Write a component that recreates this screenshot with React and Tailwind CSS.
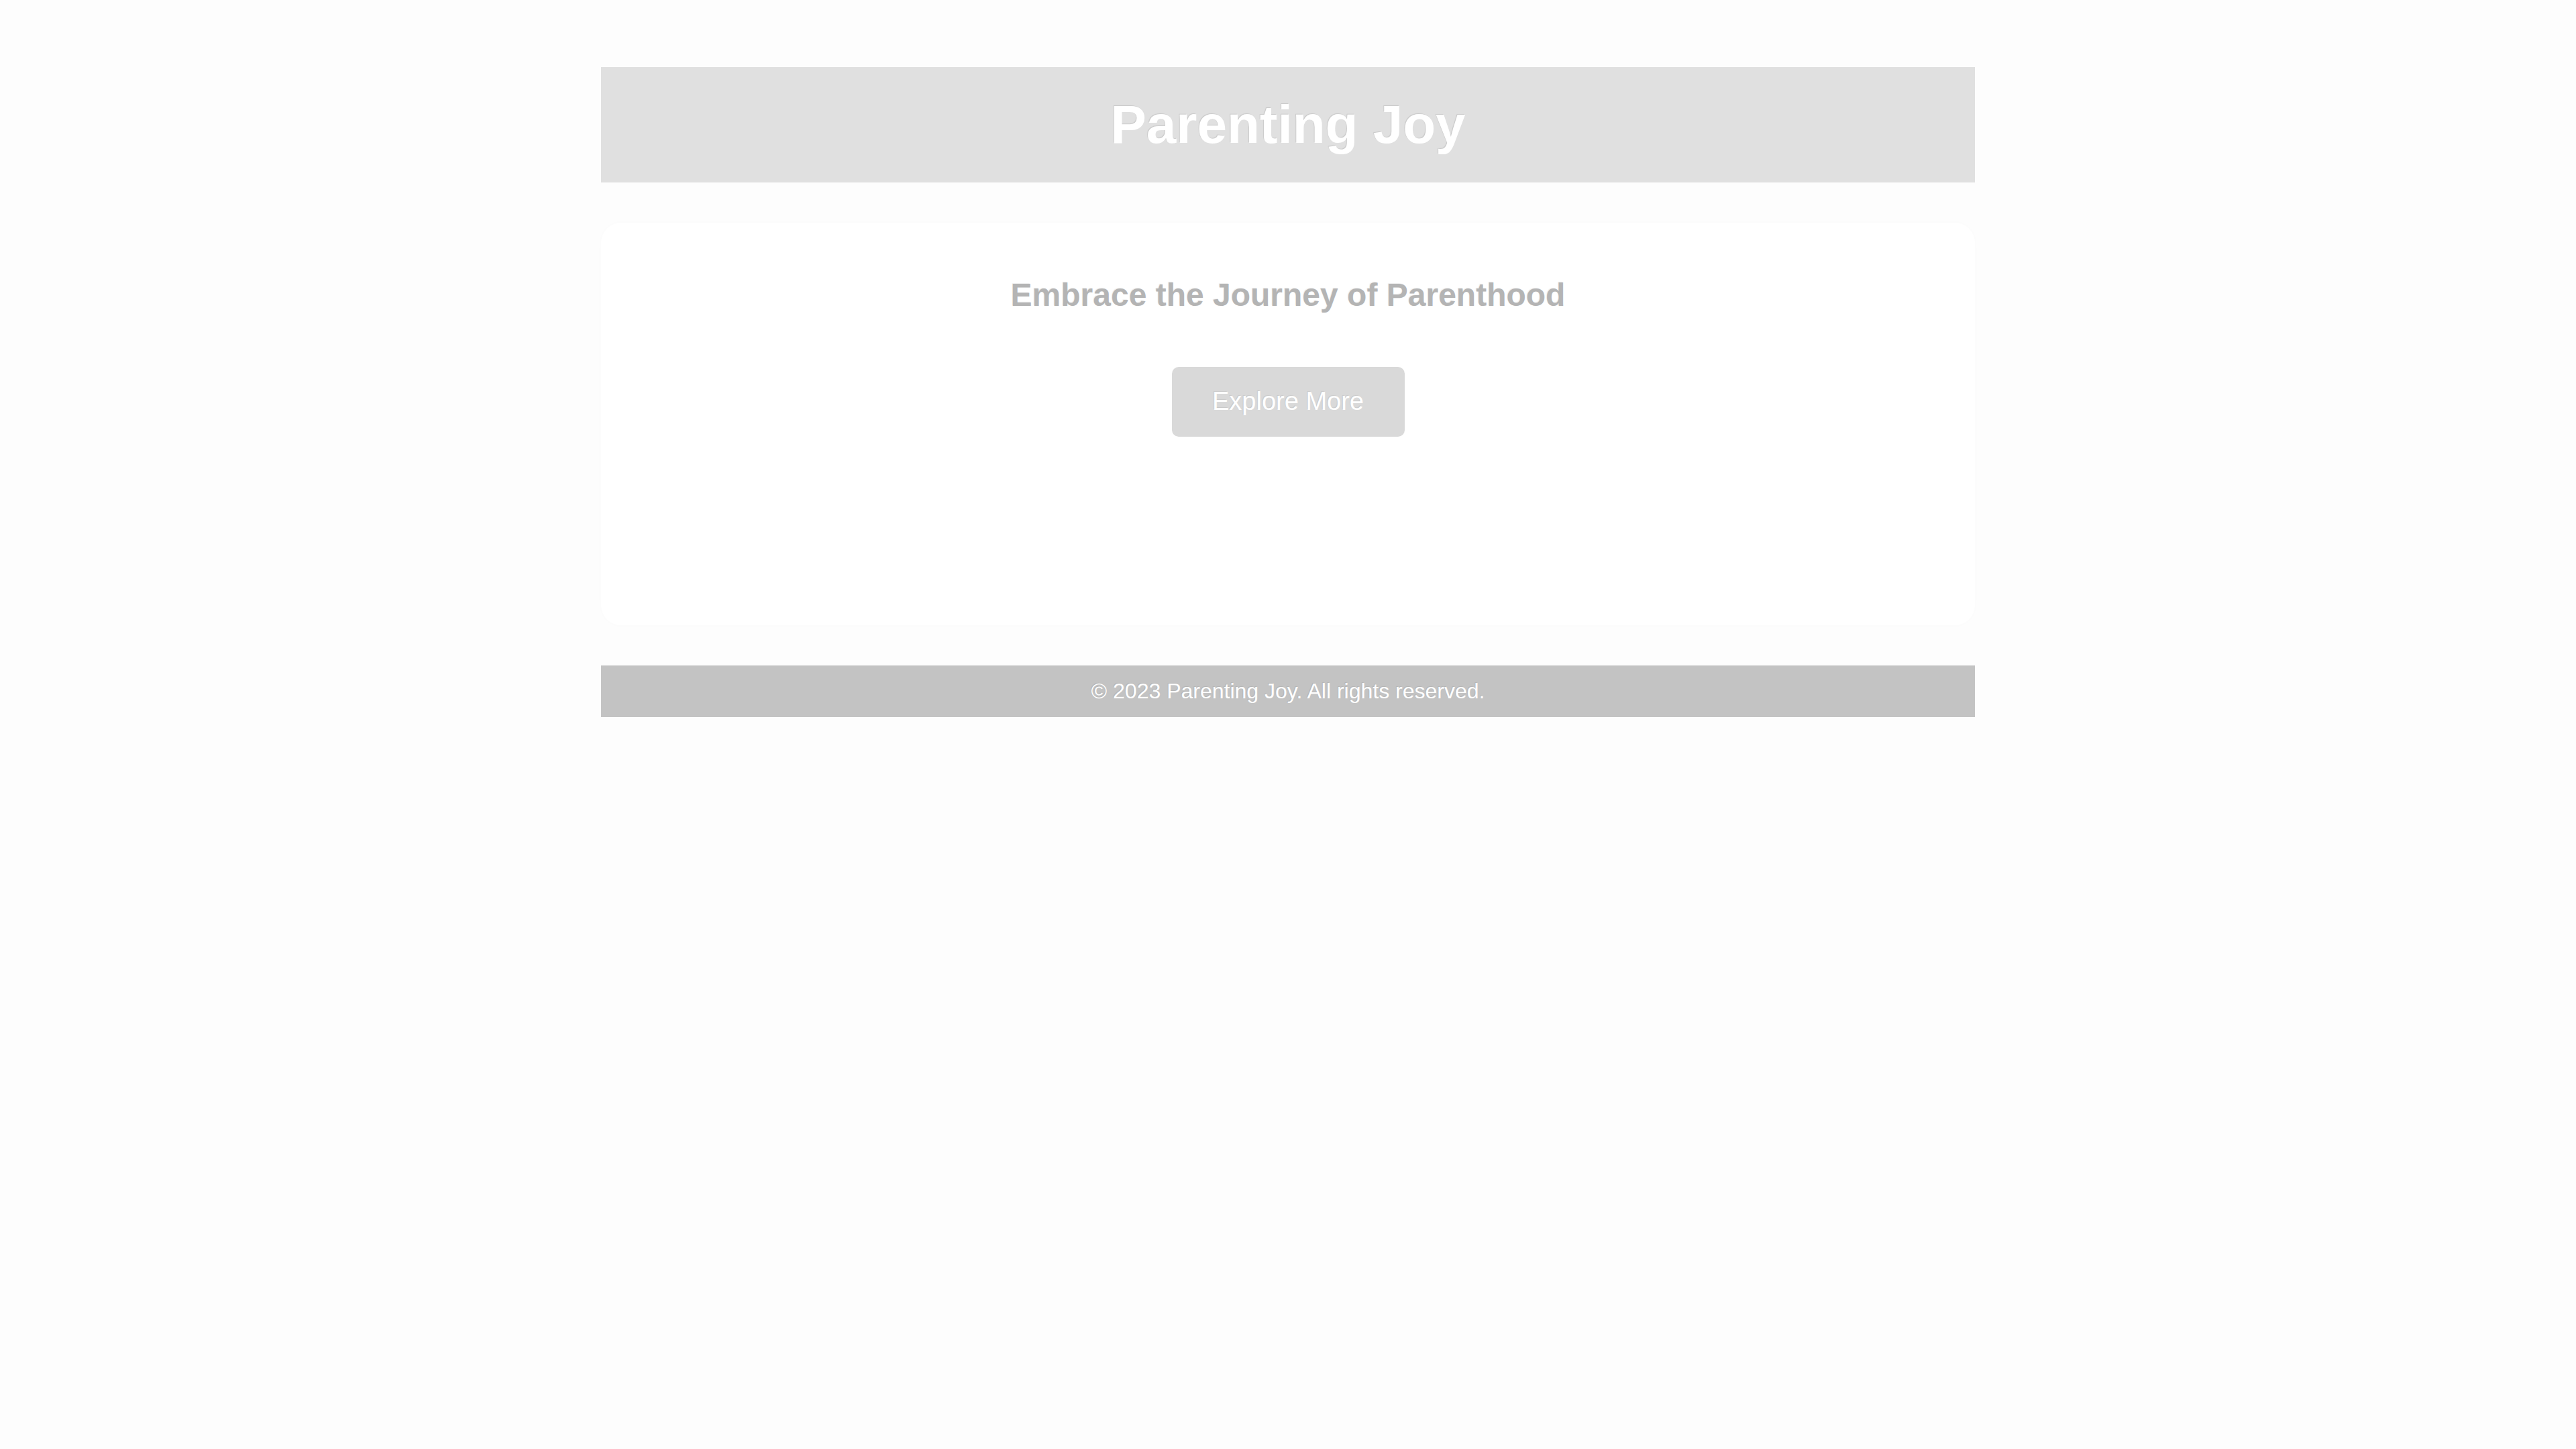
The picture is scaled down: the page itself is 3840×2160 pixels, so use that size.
export default function App() {
  return (
    <div className="min-h-screen bg-[#fdfdfd] pt-[100px] font-['Liberation_Sans',Arial,sans-serif]">
      <div className="mx-auto w-[2048px]">
        <header className="h-[172px] bg-[#e0e0e0] flex items-center justify-center">
          <h1 className="text-[80px] font-bold text-white leading-[1.15] [text-shadow:-1px_-1px_1px_rgba(0,0,0,0.1)]">
            Parenting Joy
          </h1>
        </header>
        <main className="mt-[60px] h-[600px] bg-white rounded-[30px] shadow-[0_0_12px_rgba(0,0,0,0.01)] p-[40px] flex flex-col items-center">
          <h2 className="mt-[40px] text-[48px] font-bold text-[#b4b4b4] leading-[1.15] [text-shadow:-1px_-1px_1px_rgba(0,0,0,0.06)]">
            Embrace the Journey of Parenthood
          </h2>
          <button className="mt-[80px] h-[104px] w-[347px] rounded-[10px] bg-[#d9d9d9] text-[38px] text-white leading-[1.15] [text-shadow:-1px_-1px_1px_rgba(0,0,0,0.08)]">
            Explore More
          </button>
        </main>
        <footer className="mt-[60px] h-[77px] bg-[#c3c3c3] flex items-center justify-center">
          <p className="text-[32px] text-white leading-[1.15] [text-shadow:-1px_-1px_1px_rgba(0,0,0,0.08)]">
            © 2023 Parenting Joy. All rights reserved.
          </p>
        </footer>
      </div>
    </div>
  );
}
